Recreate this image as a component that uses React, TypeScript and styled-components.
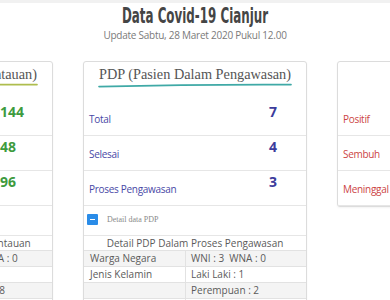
import React from "react";
import styled, { createGlobalStyle } from "styled-components";

const Global = createGlobalStyle`
  html, body { margin: 0; padding: 0; background: #fff; }
  body { overflow: hidden; font-family: "Open Sans", "Noto Sans", sans-serif; }
`;

const Page = styled.div`
  width: 390px;
  overflow: hidden;
  border-top: 3px solid #f1f1f1;
`;

const Header = styled.header`
  text-align: center;
  height: 58px;
`;

const Heading = styled.h1`
  margin: 0;
  font-family: "DejaVu Sans Condensed", "DejaVu Sans", sans-serif;
  font-weight: 700;
  font-size: 22px;
  line-height: 25px;
  color: #454545;
  transform: scaleX(0.6);
  white-space: nowrap;
`;

const Sub = styled.p`
  margin: 0;
  font-size: 10px;
  line-height: 14px;
  letter-spacing: -0.25px;
  color: #7a7a7a;
  white-space: nowrap;
`;

const CardRow = styled.div`
  display: flex;
  justify-content: center;
  align-items: flex-start;
  gap: 30px;
`;

const Card = styled.section`
  flex: 0 0 224px;
  width: 224px;
  box-sizing: border-box;
  border: 1px solid #dcdcdc;
  border-radius: 3px;
  box-shadow: 0 1px 2px rgba(0, 0, 0, 0.05);
  background: #fff;
`;

const CardHead = styled.div`
  height: 39px;
  box-sizing: border-box;
  padding-top: 3px;
  display: flex;
  flex-direction: column;
  align-items: center;
`;

const CardTitle = styled.h2`
  margin: 0;
  font-family: "Liberation Serif", serif;
  font-weight: 400;
  font-size: 14.3px;
  line-height: 18px;
  color: #555;
  white-space: nowrap;
`;

const Underline = styled.svg`
  display: block;
  width: 194px;
  height: 5px;
`;

const StatRow = styled.div<{ $labelWidth: number }>`
  display: grid;
  grid-template-columns: ${(p) => p.$labelWidth}px 1fr;
  height: 35px;
  box-sizing: border-box;
  padding: 0 5px;
  border-bottom: 1px solid #e6e6e6;
`;

const StatLabel = styled.span<{ $color: string }>`
  align-self: center;
  padding-top: 1px;
  font-size: 10px;
  letter-spacing: -0.3px;
  color: ${(p) => p.$color};
  white-space: nowrap;
`;

const StatValue = styled.span<{ $color: string }>`
  padding-top: 2px;
  font-size: 14px;
  line-height: 18px;
  font-weight: 700;
  color: ${(p) => p.$color};
  white-space: nowrap;
`;

const ToggleRow = styled.div`
  display: flex;
  align-items: center;
  gap: 9px;
  height: 30px;
  box-sizing: border-box;
  padding: 0 3px 2px;
  border-bottom: 1px solid #e6e6e6;
`;

const ToggleButton = styled.button`
  position: relative;
  width: 11px;
  height: 11px;
  padding: 0;
  border: none;
  border-radius: 1px;
  background: #2a8ce8;
  &::before {
    content: "";
    position: absolute;
    left: 3px;
    top: 5px;
    width: 5px;
    height: 1px;
    background: #fff;
  }
`;

const ToggleText = styled.span`
  font-family: "Liberation Serif", serif;
  font-size: 8px;
  color: #8a8a8a;
`;

const Table = styled.table`
  width: 100%;
  border-collapse: collapse;
  font-size: 10px;
  color: #5a5a5a;
`;

const Tr = styled.tr<{ $shade?: boolean }>`
  background: ${(p) => (p.$shade ? "#f4f4f4" : "#fff")};
`;

const Th = styled.th`
  height: 14px;
  padding: 0;
  font-weight: 400;
  text-align: center;
  line-height: 14px;
  border-bottom: 1px solid #e2e2e2;
  white-space: nowrap;
`;

const Td = styled.td<{ $first?: boolean }>`
  height: 15px;
  padding: 0 0 0 ${(p) => (p.$first ? 6 : 5)}px;
  width: ${(p) => (p.$first ? "95px" : "auto")};
  line-height: 15px;
  border-bottom: 1px solid #e2e2e2;
  border-right: ${(p) => (p.$first ? "1px solid #e2e2e2" : "none")};
  white-space: pre;
`;

type Stat = { label: string; value: string };

type CardData = {
  title?: string;
  accent: string;
  labelColor: string;
  valueColor: string;
  labelWidth: number;
  stats: Stat[];
  detail?: {
    toggle: string;
    heading: string;
    wn: string;
    male: string;
    female: string;
  };
};

const cards: CardData[] = [
  {
    title: "ODP (Orang Dalam Pemantauan)",
    accent: "#aebd4e",
    labelColor: "#3e9b3e",
    valueColor: "#3e9b3e",
    labelWidth: 165,
    stats: [
      { label: "Total", value: "144" },
      { label: "Selesai", value: "48" },
      { label: "Proses Pemantauan", value: "96" },
    ],
    detail: {
      toggle: "Detail data ODP",
      heading: "Detail ODP Dalam Proses Pemantauan",
      wn: "WNI : 96  WNA : 0",
      male: "Laki Laki : 48",
      female: "Perempuan : 8",
    },
  },
  {
    title: "PDP (Pasien Dalam Pengawasan)",
    accent: "#3fa9a6",
    labelColor: "#4848a6",
    valueColor: "#3c3c9c",
    labelWidth: 180,
    stats: [
      { label: "Total", value: "7" },
      { label: "Selesai", value: "4" },
      { label: "Proses Pengawasan", value: "3" },
    ],
    detail: {
      toggle: "Detail data PDP",
      heading: "Detail PDP Dalam Proses Pengawasan",
      wn: "WNI : 3  WNA : 0",
      male: "Laki Laki : 1",
      female: "Perempuan : 2",
    },
  },
  {
    accent: "#d9534f",
    labelColor: "#cc4444",
    valueColor: "#cc4444",
    labelWidth: 180,
    stats: [
      { label: "Positif", value: "0" },
      { label: "Sembuh", value: "0" },
      { label: "Meninggal", value: "0" },
    ],
  },
];

function StatCard({ data }: { data: CardData }) {
  return (
    <Card>
      <CardHead>
        {data.title && (
          <>
            <CardTitle>{data.title}</CardTitle>
            <Underline viewBox="0 0 194 5">
              <path
                d="M1 3.6 Q 97 1.2 193 1.6"
                fill="none"
                stroke={data.accent}
                strokeWidth="1.7"
                strokeLinecap="round"
              />
            </Underline>
          </>
        )}
      </CardHead>
      {data.stats.map((s) => (
        <StatRow key={s.label} $labelWidth={data.labelWidth}>
          <StatLabel $color={data.labelColor}>{s.label}</StatLabel>
          <StatValue $color={data.valueColor}>{s.value}</StatValue>
        </StatRow>
      ))}
      {data.detail && (
        <>
          <ToggleRow>
            <ToggleButton aria-label="toggle" />
            <ToggleText>{data.detail.toggle}</ToggleText>
          </ToggleRow>
          <Table>
            <tbody>
              <Tr>
                <Th colSpan={2}>{data.detail.heading}</Th>
              </Tr>
              <Tr $shade>
                <Td $first>Warga Negara</Td>
                <Td>{data.detail.wn}</Td>
              </Tr>
              <Tr>
                <Td $first>Jenis Kelamin</Td>
                <Td>{data.detail.male}</Td>
              </Tr>
              <Tr $shade>
                <Td $first></Td>
                <Td>{data.detail.female}</Td>
              </Tr>
              <Tr>
                <Td $first></Td>
                <Td></Td>
              </Tr>
            </tbody>
          </Table>
        </>
      )}
    </Card>
  );
}

export default function App() {
  return (
    <Page>
      <Global />
      <Header>
        <Heading>Data Covid-19 Cianjur</Heading>
        <Sub>Update Sabtu, 28 Maret 2020 Pukul 12.00</Sub>
      </Header>
      <CardRow>
        {cards.map((c, i) => (
          <StatCard key={i} data={c} />
        ))}
      </CardRow>
    </Page>
  );
}
